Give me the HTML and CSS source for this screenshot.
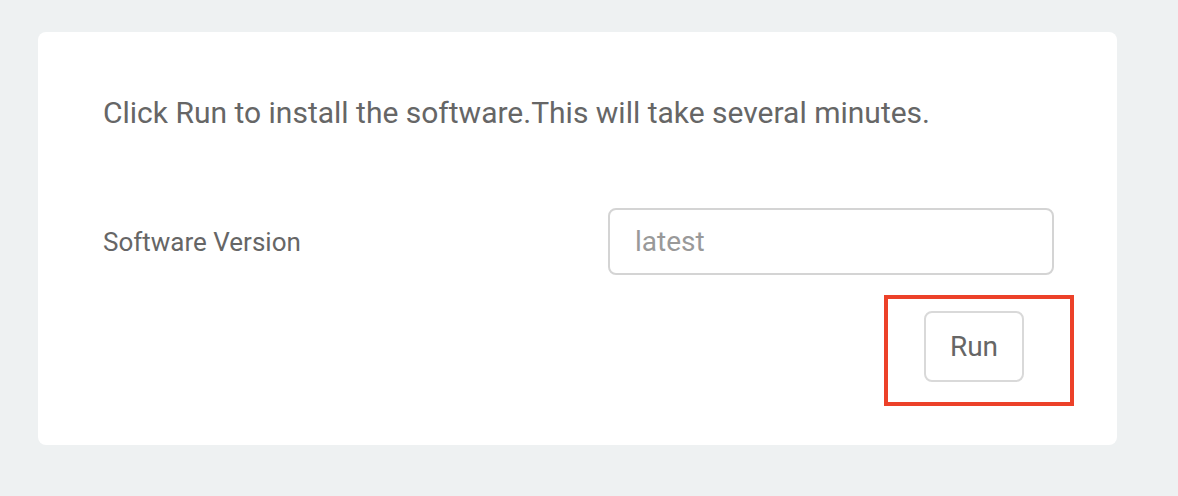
FILE: index.html
```html
<!DOCTYPE html>
<html>
<head>
<meta charset="utf-8">
<link rel="stylesheet" href="styles.css">
</head>
<body>
<div class="card">
  <p class="intro">Click Run to install the software.This will take several minutes.</p>
  <div class="field-row">
    <label class="field-label" for="ver">Software Version</label>
    <input class="field-input" id="ver" type="text" placeholder="latest">
  </div>
  <div class="actions">
    <div class="highlight">
      <button class="run-btn" type="button">Run</button>
    </div>
  </div>
</div>
</body>
</html>
```

FILE: styles.css
```css
html, body {
  margin: 0;
  padding: 0;
}
body {
  background: #eef1f2;
  font-family: Roboto, "Liberation Sans", Arial, sans-serif;
  color: #666666;
  padding: 32px 61px 51px 38px;
}
.card {
  background: #ffffff;
  border-radius: 8px;
  height: 413px;
  box-sizing: border-box;
  padding: 0 63px 0 65px;
}
.intro {
  margin: 0;
  padding-top: 63px;
  font-size: 30px;
  line-height: 36px;
  color: #666666;
}
.field-row {
  display: flex;
  align-items: center;
  margin-top: 77px;
}
.field-label {
  flex: 1;
  font-size: 26px;
  color: #666666;
}
.field-input {
  width: 446px;
  height: 67px;
  box-sizing: border-box;
  border: 2px solid #d4d4d4;
  border-radius: 8px;
  padding: 0 25px;
  font-family: inherit;
  font-size: 28px;
  color: #666;
  outline: none;
}
.field-input::placeholder {
  color: #999999;
}
.actions {
  display: flex;
  justify-content: flex-end;
  padding-right: 30px;
  margin-top: 36px;
}
.highlight {
  position: relative;
}
.highlight::before {
  content: "";
  position: absolute;
  left: -40px;
  top: -16px;
  right: -50px;
  bottom: -24px;
  border: 4px solid #ec4129;
  pointer-events: none;
}
.run-btn {
  display: block;
  width: 100px;
  height: 71px;
  box-sizing: border-box;
  border: 2px solid #d9d9d9;
  border-radius: 8px;
  background: #ffffff;
  font-family: inherit;
  font-size: 28px;
  color: #666666;
  padding: 0;
}
```
